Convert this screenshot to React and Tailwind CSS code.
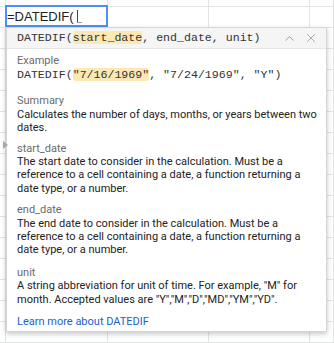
import { ChevronUp, X } from "lucide-react";

const ROWS = 16;
const COLS = [6, 102, 101, 101, 24];

function SheetGrid() {
  return (
    <div className="flex flex-col">
      <div className="flex h-[7px] border-b border-[#e2e3e3]">
        {COLS.map((w, i) => (
          <div key={i} style={{ width: w }} className="shrink-0 border-r border-[#e2e3e3]" />
        ))}
      </div>
      {Array.from({ length: ROWS }).map((_, r) => (
        <div key={r} className="flex h-[21px] border-b border-[#e2e3e3]">
          {COLS.map((w, i) => (
            <div key={i} style={{ width: w }} className="shrink-0 border-r border-[#e2e3e3]" />
          ))}
        </div>
      ))}
    </div>
  );
}

function Section({ label, children, className = "" }) {
  return (
    <div className={className}>
      <div className="text-[#6b6b6b]">{label}</div>
      <div className="text-[#222]">{children}</div>
    </div>
  );
}

export default function App() {
  return (
    <div className="relative w-[334px] h-[343px] overflow-hidden bg-white">
      <SheetGrid />

      {/* Cell editor */}
      <div className="absolute left-[5px] top-[5px] w-[103px] h-[22px] border-2 border-[#4d8ff5] bg-white flex items-center">
        <span className="font-['Liberation_Sans',Arial,sans-serif] text-[13px] text-[#222] leading-none">=DATEDIF(</span>
        <span className="relative ml-[3px] h-[13px] w-[5px]">
          <span className="absolute left-0 top-0 h-[13px] w-px bg-[#444]" />
          <span className="absolute left-0 bottom-0 h-px w-[5px] bg-[#999]" />
        </span>
      </div>

      {/* Formula help popup */}
      <div className="absolute left-[6px] top-[27px] w-[321px] h-[305px] bg-white border border-[#d6d6d6] shadow-[0_2px_5px_rgba(0,0,0,0.22)] font-['Roboto',sans-serif] text-[11px] leading-[13.4px]">
        <div className="flex items-center h-[21px] bg-[#f5f5f5] border-b border-[#e6e6e6] pl-[10px] pr-[8px]">
          <div className="flex-1 font-['Liberation_Mono',monospace] text-[11.6px] text-[#333] whitespace-nowrap">
            DATEDIF(<span className="bg-[#fce8b2] rounded-[3px]">start_date</span>, end_date, unit)
          </div>
          <ChevronUp size={15} strokeWidth={1.6} className="text-[#a0a0a0]" />
          <X size={14} strokeWidth={1.5} className="text-[#a0a0a0] ml-[7px]" />
        </div>

        <div className="pl-[10px] pr-[8px] pt-[5px]">
          <div>
            <div className="text-[#6b6b6b]">Example</div>
            <div className="font-['Liberation_Mono',monospace] text-[11.6px] text-[#333] leading-[16px] whitespace-nowrap">
              DATEDIF(<span className="bg-[#fce8b2] rounded-[3px]">"7/16/1969"</span>, "7/24/1969", "Y")
            </div>
          </div>

          <Section label="Summary" className="mt-[11px]">
            Calculates the number of days, months, or years between two dates.
          </Section>

          <Section label="start_date" className="mt-[7px]">
            The start date to consider in the calculation. Must be a reference to a cell containing a date, a function returning a date type, or a number.
          </Section>

          <Section label="end_date" className="mt-[8px]">
            The end date to consider in the calculation. Must be a reference to a cell containing a date, a function returning a date type, or a number.
          </Section>

          <Section label="unit" className="mt-[9px]">
            A string abbreviation for unit of time. For example, "M" for month. Accepted values are "Y","M","D","MD","YM","YD".
          </Section>

          <div className="mt-[9px] text-[#1a5fd0]">Learn more about DATEDIF</div>
        </div>
      </div>

      {/* Argument marker */}
      <div className="absolute left-[3px] top-[141px] w-0 h-0 border-y-[4px] border-y-transparent border-l-[5px] border-l-[#a8a8a8]" />
    </div>
  );
}
